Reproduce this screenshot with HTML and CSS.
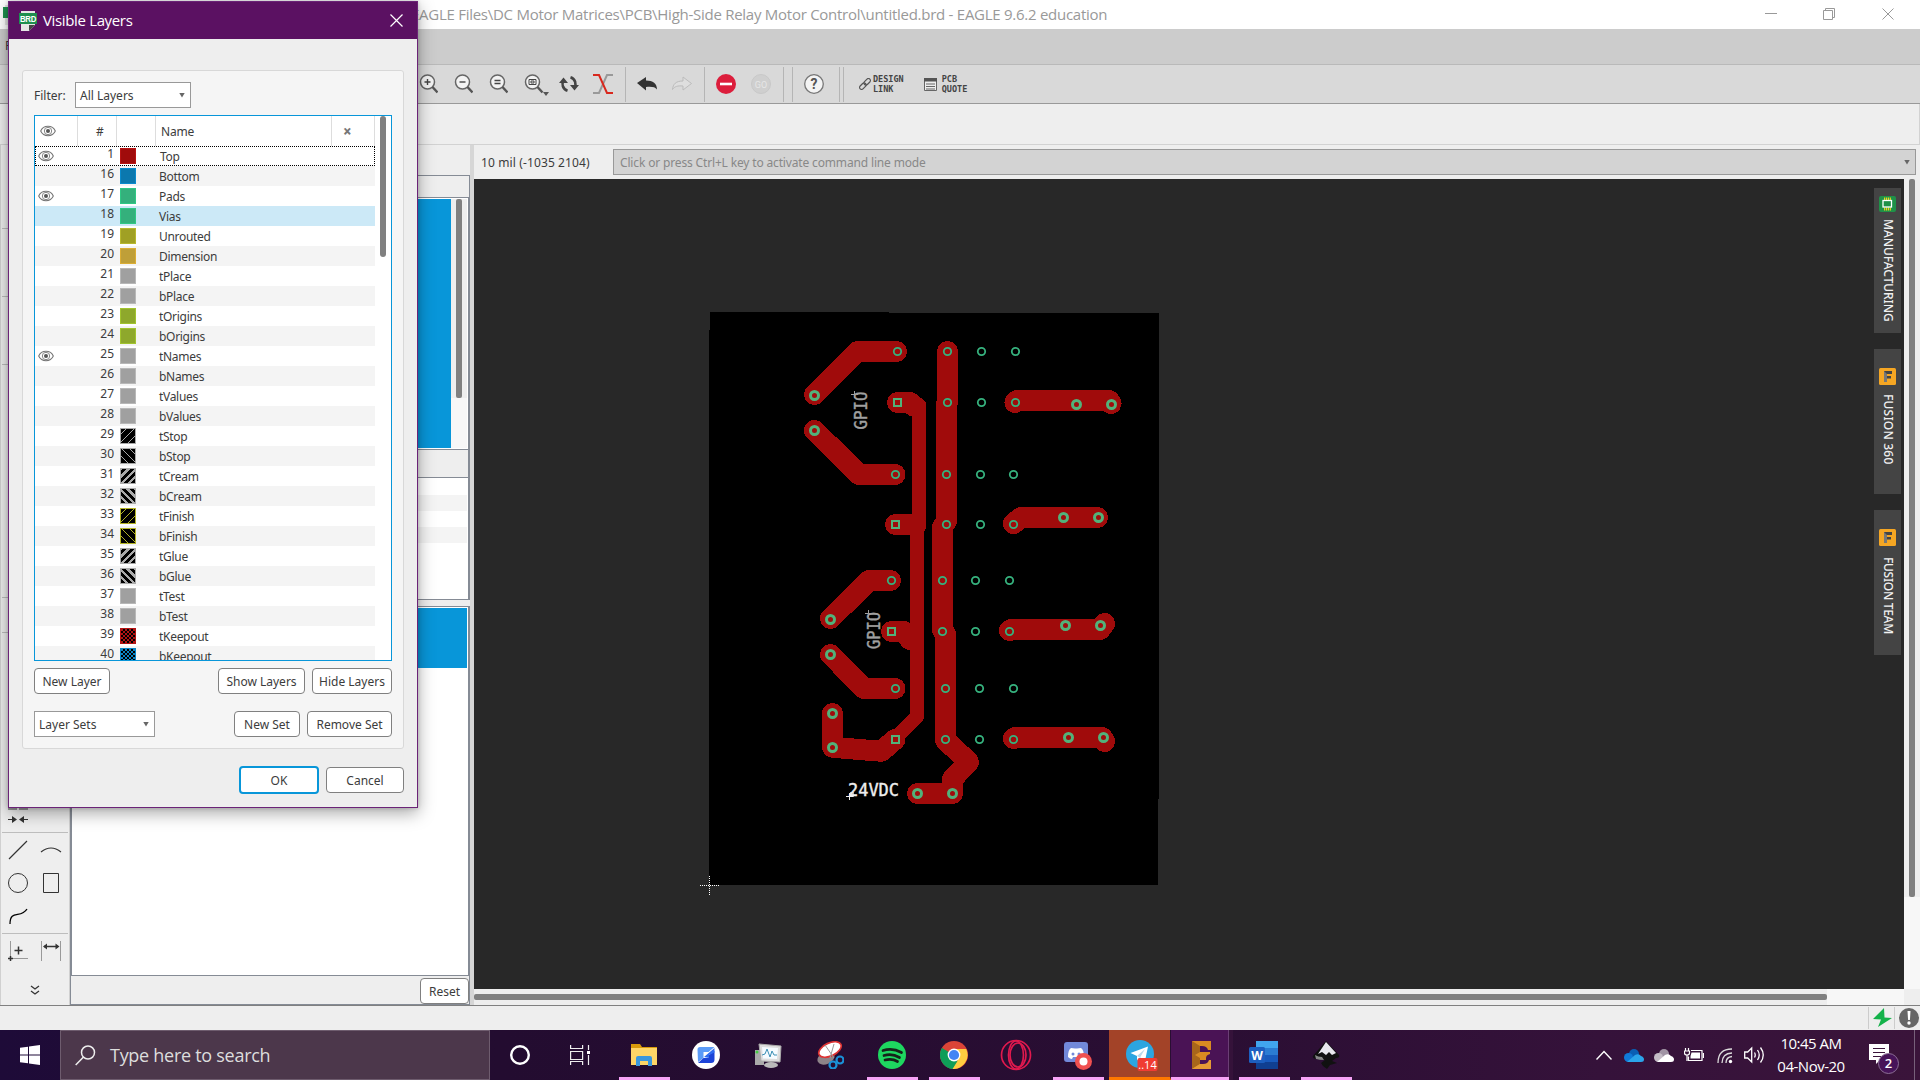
FILE: index.html
```
<!DOCTYPE html>
<html lang="en">
<head>
<meta charset="utf-8">
<title>EAGLE</title>
<link rel="stylesheet" href="styles.css">
</head>
<body>
<svg class="defs" width="0" height="0">
  <symbol id="eye" viewBox="0 0 16 12"><path d="M.7 6C3.500 -.3 12.500 -.3 15.300 6 12.500 12.300 3.500 12.300 .7 6Z" fill="#fff" stroke="#777" stroke-width="1.100"/><circle cx="8" cy="6" r="3.700" fill="none" stroke="#888"/><circle cx="8" cy="6" r="2" fill="#555"/></symbol>
  <symbol id="brd" viewBox="0 0 18 20"><path d="M2 0h14v14l-6 6H2z" fill="#e6e6e6"/><path d="M16 14l-6 6v-6z" fill="#444"/><rect y="2" width="18" height="11" fill="#1e8f4e"/><text x="9" y="10.700" font-size="8.500" font-weight="bold" text-anchor="middle" textLength="16" lengthAdjust="spacingAndGlyphs" fill="#fff" font-family="Liberation Sans">BRD</text></symbol>
  <symbol id="lens" viewBox="0 0 20 20"><circle cx="8.500" cy="8" r="7" fill="#f3f3f3" stroke="#666" stroke-width="1.500"/><path d="M13.500 13l5 5.500" stroke="#555" stroke-width="2.400"/></symbol>
  <symbol id="fusion" viewBox="0 0 17 17"><rect width="17" height="17" rx="1.500" fill="#f5a623"/><path d="M5 3h8v3H8v2h4v2.500H8V14H5z" fill="#444"/><path d="M5 3l3 3v8H5z" fill="#777"/></symbol>
</svg>

<header class="titlebar">
  <svg class="app-icon" width="18" height="20"><path d="M2 0h14v20H2z" fill="#e6e6e6"/><path d="M0 2h18v11H0z" fill="#1e8f4e"/></svg>
  <span class="path">EAGLE Files\DC Motor Matrices\PCB\High-Side Relay Motor Control\untitled.brd - EAGLE 9.6.2 education</span>
  <svg class="winbtns" width="130" height="29" fill="none" stroke="#999"><path d="M0 13.500h12"/><path d="M58.500 10.500h9v9h-9zM60.500 10.500v-2h9v9h-2"/><path d="M117.500 8.500l11 11m0-11l-11 11"/></svg>
</header>
<nav class="menubar">F</nav>
<div class="toolbar">
  <svg class="tb" width="19" height="20"><use href="#lens" width="20" height="20"/><path d="M5.500 8h6M8.500 5v6" stroke="#444" stroke-width="1.400"/></svg>
  <svg class="tb" width="19" height="20"><use href="#lens" width="20" height="20"/><path d="M5.500 8h6" stroke="#444" stroke-width="1.400"/></svg>
  <svg class="tb" width="19" height="20"><use href="#lens" width="20" height="20"/><path d="M5.500 6.500h6m-6 3h6" stroke="#444" stroke-width="1.400"/></svg>
  <svg class="tb" width="25" height="24"><use href="#lens" y="2" width="20" height="20"/><path d="M5 7.500h7v5H5zM7 9h3v2H7z" fill="none" stroke="#444"/><path d="M19 20h6l-3 4z" fill="#555"/></svg>
  <svg class="tb rot" width="20" height="18" fill="none" stroke="#444" stroke-width="2.600"><path d="M8.500 15.700C3.500 14 2.500 9 4.500 5.500M11.500 2.300c5 1.700 6 6.700 4 10.200"/><path d="M0 8l4.500-5.500L9 8zM11 10h9l-4.500 5.500z" fill="#444" stroke="none"/></svg>
  <svg class="tb xx" width="20" height="20" fill="none" stroke-width="2"><path d="M20 1h-6L6 19H0" stroke="#999"/><path d="M0 1h6l8 18h6" stroke="#d8281e"/></svg>
  <i class="sep s1"></i>
  <svg class="tb undo" width="20" height="16"><path d="M0 7L9 1v3.500c7 0 11 3 11 9-2-2.500-5-3-11-2.500v3.500z" fill="#333"/></svg>
  <svg class="tb redo" width="20" height="16"><path d="M19.500 7.500L11 1v4C4 5 1 8 .5 13.500c2-3 5-4 10.500-3.500v4z" fill="#dedede" stroke="#bbb"/></svg>
  <i class="sep s2"></i>
  <svg class="tb stop" width="20" height="20"><circle cx="10" cy="10" r="10" fill="#dc1e3c"/><path d="M4 10h12" stroke="#fff" stroke-width="2.600"/></svg>
  <svg class="tb go" width="20" height="20"><circle cx="10" cy="10" r="9.500" fill="#cfcfcf" stroke="#c8c8c8"/><text x="10" y="13.500" font-size="9" text-anchor="middle" fill="#e6e6e6" font-family="Roboto">GO</text></svg>
  <i class="sep s3"></i><i class="sep s4"></i>
  <svg class="tb help" width="20" height="20"><circle cx="10" cy="10" r="9.300" fill="#f4f4f4" stroke="#777" stroke-width="1.300"/><text x="10" y="15" font-size="14" font-weight="bold" text-anchor="middle" fill="#555" font-family="Roboto">?</text></svg>
  <i class="sep s5"></i><i class="sep s4b"></i>
  <svg class="tb link" width="12" height="12" fill="none" stroke="#555" stroke-width="1.200"><rect x="4.500" y="2" width="7.500" height="4" rx="2" transform="rotate(-45 8 4)"/><rect x="0" y="6" width="7.500" height="4" rx="2" transform="rotate(-45 4 8)"/></svg>
  <span class="tool-text">DESIGN<br>LINK</span>
  <svg class="tb quote" width="13" height="13"><path d="M.5.5h12v12H.5zM2 6h9M2 8.500h9M2 11h9" fill="#eee" stroke="#666"/><path d="M0 0h13v3.500H0z" fill="#555"/></svg>
  <span class="tool-text">PCB<br>QUOTE</span>
</div>
<div class="params"></div>

<main class="main">
  <aside class="tools">
    <svg width="70" height="860" fill="none" stroke="#333">
      <path d="M.5 0v860" stroke="#d0d0d0"/><path d="M69.500 0v860" stroke="#d0d0d0"/>
      <path d="M2 83.500h66M2 151.500h66M2 219.500h66M2 452.500h66M2 487.500h66M2 687.500h66M2 788.500h66" stroke="#bdbdbd"/>
      <path d="M8 664h9m2 0h9" stroke="#999" stroke-width="2"/>
      <path d="M8 674.500h5M23 674.500h5"/><path d="M12 671l5 3.500-5 3.500zM24 671l-5 3.500 5 3.500z" fill="#333" stroke="none"/>
      <path d="M9 714L27 696M41 707q10-8 20 0" stroke-width="1.200"/>
      <circle cx="18" cy="738" r="9.500"/><path d="M43.500 728.500h15v19h-15z"/>
      <path d="M10 779c0-15 11-5 17-15" stroke="#000" stroke-width="1.300"/>
      <path d="M10.500 796v15M13 813.500h15M41.500 796v20M60.500 796v20" stroke="#999"/><path d="M18.500 801.500v8m-4-4h8M10.500 811v5M8 813.500h5M44 801.500h14" stroke-width="1.500"/><path d="M43 801.500l4-3v6zM59.500 801.500l-4-3v6z" fill="#333" stroke="none"/>
      <path d="M31 841l4 3 4-3M31 846l4 3 4-3" stroke-width="1.300"/>
    </svg>
  </aside>
  <section class="dock">
    <div class="dock-gap"></div>
    <div class="dock-head"></div>
    <div class="dock-list"><div class="blue"></div><div class="track"><i></i></div></div>
    <div class="dock-label"></div>
    <div class="dock-props"><i></i><i></i><i></i><i></i></div>
    <div class="dock-items"><div class="blue"></div></div>
    <div class="dock-foot"><button class="btn reset">Reset</button></div>
  </section>
  <div class="splitter"></div>
  <section class="editor">
    <div class="cmdline"><span class="coords">10 mil (-1035 2104)</span><div class="cmd"><span>Click or press Ctrl+L key to activate command line mode</span><b class="arrow"></b></div></div>
    <div class="view">
      <div class="canvas">
        <svg class="board" width="1400" height="810" viewBox="474 179 1400 810">
          <path d="M710 312h179v1h270v486h-1v86H709V330h1z" fill="#000"/>
          <g fill="none" stroke="#a00b0b" stroke-width="21" stroke-linecap="round" stroke-linejoin="round" shape-rendering="crispEdges">
            <path d="M814.500 394.500L857.500 351.500H896.500M814.500 430.500L859 474.500H895"/>
            <path d="M897.500 402.500H910l3.500 3.500M895.500 524.500H914M891.500 631.500H904l6 8"/>
            <path d="M947.500 351.500V402L946.500 404V521L942.500 527V630L945.500 634V740L968.500 762L952.500 779V793.500H917.500"/>
            <path d="M1015 402.500L1017 400.500H1109L1111 403.500M1013.500 523.500L1021 517.500H1097.500M1009.500 630.500L1011 629.500H1100L1104.500 623.500M1013.500 738.500L1015 737.500H1102L1104.500 741.500"/>
            <path d="M830.500 618.500L869 580.500H890.500M830.500 654.500L864 688.500H895"/>
            <path d="M832.500 713.500V747.300L881.500 751.300L895 739.500"/>
            <path d="M919 405V526L917 531V716.500L895 739" stroke-width="14"/>
          </g>
          <g fill="none" stroke="#36b27e" stroke-width="1.800">
            <circle cx="897.500" cy="351.500" r="3.700"/><circle cx="947.500" cy="351.500" r="3.700"/><circle cx="981.500" cy="351.500" r="3.700"/><circle cx="1015.500" cy="351.500" r="3.700"/>
            <circle cx="947.500" cy="402.500" r="3.700"/><circle cx="981.500" cy="402.500" r="3.700"/><circle cx="1015.500" cy="402.500" r="3.700"/>
            <circle cx="895.500" cy="474.500" r="3.700"/><circle cx="946.500" cy="474.500" r="3.700"/><circle cx="980.500" cy="474.500" r="3.700"/><circle cx="1013.500" cy="474.500" r="3.700"/>
            <circle cx="946.500" cy="524.500" r="3.700"/><circle cx="980.500" cy="524.500" r="3.700"/><circle cx="1013.500" cy="524.500" r="3.700"/>
            <circle cx="891.500" cy="580.500" r="3.700"/><circle cx="942.500" cy="580.500" r="3.700"/><circle cx="975.500" cy="580.500" r="3.700"/><circle cx="1009.500" cy="580.500" r="3.700"/>
            <circle cx="942.500" cy="631.500" r="3.700"/><circle cx="975.500" cy="631.500" r="3.700"/><circle cx="1009.500" cy="631.500" r="3.700"/>
            <circle cx="895.500" cy="688.500" r="3.700"/><circle cx="945.500" cy="688.500" r="3.700"/><circle cx="979.500" cy="688.500" r="3.700"/><circle cx="1013.500" cy="688.500" r="3.700"/>
            <circle cx="945.500" cy="739.500" r="3.700"/><circle cx="979.500" cy="739.500" r="3.700"/><circle cx="1013.500" cy="739.500" r="3.700"/>
          </g>
          <g fill="none" stroke="#52b27a" stroke-width="2">
            <path d="M894 399h7v7h-7zM892 521h7v7h-7zM888 628h7v7h-7zM892 736h7v7h-7z"/>
          </g>
          <g fill="none" stroke="#52b27a" stroke-width="3">
            <circle cx="814.500" cy="395.500" r="4"/><circle cx="814.500" cy="430.500" r="4"/><circle cx="1076.500" cy="404.500" r="4"/><circle cx="1111.500" cy="404.500" r="4"/>
            <circle cx="1063.500" cy="517.500" r="4"/><circle cx="1098.500" cy="517.500" r="4"/><circle cx="1065.500" cy="625.500" r="4"/><circle cx="1100.500" cy="625.500" r="4"/>
            <circle cx="830.500" cy="619.500" r="4"/><circle cx="830.500" cy="654.500" r="4"/><circle cx="1068.500" cy="737.500" r="4"/><circle cx="1103.500" cy="737.500" r="4"/>
            <circle cx="832.500" cy="713.500" r="4"/><circle cx="832.500" cy="747.500" r="4"/><circle cx="917.500" cy="793.500" r="4"/><circle cx="952.500" cy="793.500" r="4"/>
          </g>
          <g class="silk" fill="#a0a0a0" stroke="#a0a0a0" stroke-width=".4">
            <text transform="translate(867 429.500) rotate(-90)" textLength="38" lengthAdjust="spacingAndGlyphs">GPIO</text>
            <text transform="translate(880 649) rotate(-90)" textLength="37" lengthAdjust="spacingAndGlyphs">GPIO</text>
            <text x="848" y="796" textLength="51" lengthAdjust="spacingAndGlyphs" fill="#eee" stroke="#eee">24VDC</text>
          </g>
          <path d="M854.500 391v7M851 394.500h7M868.500 610v7M865 613.500h7" stroke="#a0a0a0"/>
          <path d="M849.500 793v7M846 796.500h7" stroke="#eee"/><path d="M850 792h4v5h-4z" fill="#eee" opacity=".7"/>
          <path d="M700 885.500h20M709.500 876v20" stroke="#fff" stroke-dasharray="1 1"/>
        </svg>
        <div class="tabs">
          <div class="tab mfg"><svg width="17" height="16"><rect width="17" height="16" rx="2" fill="#1f9148"/><path d="M5 3h7M5 13h7" stroke="#e8d820" stroke-width="3" stroke-dasharray="1.200 .7"/><rect x="4" y="4.500" width="8.500" height="6.500" fill="#1f9148" stroke="#fff" stroke-width="1.300"/></svg><span>MANUFACTURING</span></div>
          <div class="tab f360"><svg width="17" height="17"><use href="#fusion"/></svg><span>FUSION 360</span></div>
          <div class="tab team"><svg width="17" height="17"><use href="#fusion"/></svg><span>FUSION TEAM</span></div>
        </div>
      </div>
      <div class="vscroll"><i></i></div>
    </div>
    <div class="hscroll"><i></i></div>
  </section>
</main>
<footer class="status">
  <svg width="27" height="22"><path d="M15 1L4 12l8 .5L9 20 23 11l-7.500-.5z" fill="#14b24a"/></svg>
  <svg class="warn" width="20" height="20"><circle cx="10" cy="10" r="10" fill="#666"/><path d="M8.500 3h3l-.6 9H9.100z" fill="#fff"/><circle cx="10" cy="15" r="1.700" fill="#fff"/></svg>
</footer>

<div class="taskbar">
  <div class="start"><svg width="20" height="20" fill="#fff"><path d="M0 2.800L8 1.700V9.500H0zM9 1.500L20 0v9.500H9zM0 10.500h8v7.800L0 17.200zM9 10.500h11V20L9 18.500z"/></svg></div>
  <div class="search"><svg width="21" height="21" fill="none" stroke="#eee" stroke-width="1.500"><circle cx="13" cy="7.500" r="6.500"/><path d="M8.500 12L.7 20"/></svg><span>Type here to search</span></div>
  <div class="slot cortana"><svg width="22" height="22"><circle cx="11" cy="11" r="8.800" fill="none" stroke="#fff" stroke-width="2.400"/></svg></div>
  <div class="slot tv"><svg width="21" height="20" fill="none" stroke="#eee" stroke-width="1.200"><path d="M.6 0v3.500h12V0M.6 6.500h12v8H.6zM.6 20v-3.500h12V20M18.500 0v5M18.500 10v10"/><path d="M17 6h3v3h-3z" fill="#fff" stroke="none"/></svg></div>
  <div class="apps">
    <div class="slot run"><svg width="28" height="28"><path d="M1 3h9l2 3h15v17H1z" fill="#d99a0b"/><path d="M1 7h26v17H1z" fill="#ffd567"/><path d="M6 25v-8q0-2 2-2h12q2 0 2 2v8h-4v-5h-8v5z" fill="#3b97dd"/></svg></div>
    <div class="slot"><svg width="28" height="28"><circle cx="14" cy="14" r="14" fill="#fff"/><path d="M5.500 8.500Q5.500 6 8 6h14.500l-6 5h-5v6l-5.500 4z" fill="#5b9bf8"/><path d="M22.500 10v8.500q0 3.500-3.500 3.500H6l5.500-5h5.500v-3z" fill="#1d44d8"/><path d="M12 16l10.500-9v4.500L17 14v3z" fill="#2f6bf0"/></svg></div>
    <div class="slot"><svg width="28" height="28"><path d="M1 9h9v15H1z" fill="#aaa"/><circle cx="3" cy="11" r="1.500" fill="#4c4"/><path d="M5 3l22 2-1 16-19-1z" fill="#ddd" stroke="#aaa"/><path d="M8 6l16 1-1 11-14-.5z" fill="#f5fbff"/><path d="M8 14l3-1 2-5 3 8 2-6 2 4h3" fill="none" stroke="#3b8fb5"/><ellipse cx="17" cy="24" rx="7" ry="3" fill="#bbb"/></svg></div>
    <div class="slot"><svg width="28" height="28"><ellipse cx="10" cy="17" rx="9" ry="6" fill="#8d8388" transform="rotate(-25 10 17)"/><ellipse cx="14" cy="8.500" rx="12" ry="6.500" fill="#fff" stroke="#d33" stroke-width="1.700" transform="rotate(-25 14 8.500)"/><path d="M9 4l9 13M18 3l-4 14" stroke="#999" fill="none"/><g fill="none" stroke="#1a91d8" stroke-width="2.200"><circle cx="17" cy="24" r="3.500"/><circle cx="24" cy="19" r="3.500"/></g></svg></div>
    <div class="slot run"><svg width="28" height="28"><circle cx="14" cy="14" r="14" fill="#1ed760"/><path d="M5 9.500q9.500-3 18.500 2M6 14.500q8-2.500 15.500 2M7 19q7-2 12.500 1.500" stroke="#16231a" stroke-width="2.700" fill="none" stroke-linecap="round"/></svg></div>
    <div class="slot run"><svg width="28" height="28"><circle cx="14" cy="14" r="14" fill="#db4437"/><path d="M14 14L2 7a14 14 0 0 0 10 20.800L19 17z" fill="#0f9d58"/><path d="M14 14l5 3-7 10.900A14 14 0 0 0 26.200 8H14z" fill="#ffcd40"/><path d="M2 7l6 10 6 4 3.500-1L12.500 28A14 14 0 0 1 2 7z" fill="#0f9d58"/><circle cx="14" cy="14" r="6.400" fill="#fff"/><circle cx="14" cy="14" r="5.100" fill="#4285f4"/></svg></div>
    <div class="slot"><svg width="32" height="32" fill="none" stroke="#e0194e" stroke-width="1.700"><circle cx="16" cy="16" r="14.500"/><ellipse cx="16" cy="16" rx="7.500" ry="14"/><ellipse cx="18" cy="16" rx="8" ry="12"/></svg></div>
    <div class="slot run"><svg width="30" height="30"><path d="M4 2h18q3 0 3 3v20l-5-3H4q-3 0-3-3V5q0-3 3-3z" fill="#7289da"/><path d="M5 17q0-7 3-9l4 .5h2l4-.5q3 2 3 9-2 2-4 2l-1-2h-6l-1 2q-2 0-4-2z" fill="#fff"/><circle cx="10" cy="14" r="1.500" fill="#7289da"/><circle cx="16" cy="14" r="1.500" fill="#7289da"/><circle cx="20.500" cy="21.500" r="8.500" fill="#f05050"/><circle cx="20.500" cy="21.500" r="4" fill="#fff"/></svg></div>
    <div class="slot tg"><svg width="32" height="32"><circle cx="14" cy="15" r="14" fill="#2ca5e0"/><path d="M4.500 14L22 7.500 19 22l-5-3.500-3 3V17z" fill="#fff"/><path d="M11 17l8-7-5 8.500" fill="#b8d8ea"/><rect x="11.500" y="19" width="20" height="13" rx="2" fill="#f03c32"/><text x="21.500" y="29.500" font-size="11" text-anchor="middle" fill="#fff" font-family="Open Sans">..14</text></svg></div>
    <div class="slot run full"><svg width="22" height="30"><path d="M1 1h19v9h-3q-1-4-6-4h-2v6h10v2q-4 1-4 4v2H9v5h3q5 0 6-4h2v8H1z" fill="#d98b22"/><path d="M1 1l8 5v6l-5 3 5 3v6l-8 5z" fill="#a8661a"/><path d="M1 29l8-5h3q5 0 6-4h2v9z" fill="#e59a35"/></svg></div>
    <div class="slot run"><svg width="30" height="28"><path d="M7 0h22v7H7z" fill="#41a5ee"/><path d="M7 7h22v7H7z" fill="#2b7cd3"/><path d="M7 14h22v7H7z" fill="#185abd"/><path d="M7 21h22v7H7z" fill="#103f91"/><rect y="6" width="16" height="16" rx="1.500" fill="#1d5fc0"/><text x="8" y="18.500" font-size="12" font-weight="bold" text-anchor="middle" fill="#fff" font-family="Open Sans">W</text></svg></div>
    <div class="slot run"><svg width="28" height="28"><path d="M14 0L27 14q1 3-3 3l-4 3 5 2-7 2-3 4-4-3-2-3 4-3-9-1q-4-1-3-3z" fill="#111"/><path d="M14 1l10 11-4 2-3-3-3 3-4-3-4 2z" fill="#e8e8ee"/><path d="M3 14q3 2 7 2l2 3q-5 0-8-1z" fill="#888"/></svg></div>
  </div>
  <div class="tray">
    <svg class="chev" width="16" height="10" fill="none" stroke="#fff" stroke-width="1.400"><path d="M.5 9.500L8 1.500l7.500 8"/></svg>
    <svg class="t2" width="20" height="13"><circle cx="10" cy="5" r="5" fill="#0a5fb4"/><circle cx="4.500" cy="8.500" r="4.500" fill="#0f7ad8"/><path d="M3 13l8-7q4-2 6 1 3 1 3 3.500T17 13z" fill="#2ba5ea"/></svg>
    <svg class="t3" width="20" height="13"><circle cx="10" cy="5" r="5" fill="#a094a4"/><circle cx="4.500" cy="8.500" r="4.500" fill="#c4bcc6"/><path d="M3 13l8-7q4-2 6 1 3 1 3 3.500T17 13z" fill="#fff"/></svg>
    <svg class="t4" width="20" height="14" fill="none" stroke="#fff" stroke-width="1.200"><path d="M4.500 8.500v4H18v-10H7M19.500 5v5M1.500 0v3M4.500 0v3M.5 3h5v2q0 2-2.500 2T.5 5zM3 7v6"/><path d="M7.500 4.500H16v6H6.500V8z" fill="#fff" stroke="none"/></svg>
    <svg class="t5" width="16" height="16" fill="none" stroke="#ddd" stroke-width="1.300"><path d="M1 15Q1 1 15 1M5 15q0-9.500 10-10M9 15q0-6 6-6.500"/><circle cx="13.500" cy="13.500" r="1.700" fill="#fff" stroke="none"/></svg>
    <svg class="t6" width="21" height="18" fill="none" stroke="#fff" stroke-width="1.300"><path d="M.7 6h3l4-4v14l-4-4h-3zM10.500 6.500q1.500 2.500 0 5M13.500 4q3.500 5 0 10M16.500 1.500q5.500 7.500 0 15"/></svg>
    <div class="clock"><span>10:45 AM</span><span class="date">04-Nov-20</span></div>
    <svg class="note" width="32" height="32"><path d="M0 0h20v16h-9l-4 4v-4H0z" fill="#fff"/><path d="M4 4.500h12M4 8.500h12M4 12.500h8" stroke="#3a143a" stroke-width="1.200"/><circle cx="19.500" cy="19.500" r="10" fill="#471459" stroke="#8c6f96"/><text x="19.500" y="24" font-size="13" font-weight="600" text-anchor="middle" fill="#fff" font-family="Open Sans">2</text></svg>
    <i class="peek"></i>
  </div>
</div>

<div class="dialog">
  <div class="dlg-title"><svg width="18" height="20"><use href="#brd"/></svg><span>Visible Layers</span><svg class="x" width="13" height="13" stroke="#fff" stroke-width="1.200"><path d="M.5.500l12 12m0-12l-12 12"/></svg></div>
  <div class="panel">
    <div class="filter"><label>Filter:</label><div class="select all"><span>All Layers</span><b class="arrow"></b></div></div>
    <div class="table">
      <div class="thead"><div class="h1"><svg width="16" height="12"><use href="#eye"/></svg></div><div class="h2">#</div><div class="h3"></div><div class="h4">Name</div><div class="h5">×</div></div>
      <div class="rows">
        <div class="row focus"><svg class="e" width="16" height="12"><use href="#eye"/></svg><span class="n">1</span><i class="sw top"></i><span class="nm">Top</span></div>
        <div class="row"><span class="n">16</span><i class="sw bot"></i><span class="nm">Bottom</span></div>
        <div class="row"><svg class="e" width="16" height="12"><use href="#eye"/></svg><span class="n">17</span><i class="sw grn"></i><span class="nm">Pads</span></div>
        <div class="row sel"><span class="n">18</span><i class="sw grn"></i><span class="nm">Vias</span></div>
        <div class="row"><span class="n">19</span><i class="sw unr"></i><span class="nm">Unrouted</span></div>
        <div class="row"><span class="n">20</span><i class="sw dim"></i><span class="nm">Dimension</span></div>
        <div class="row"><span class="n">21</span><i class="sw gry"></i><span class="nm">tPlace</span></div>
        <div class="row"><span class="n">22</span><i class="sw gry"></i><span class="nm">bPlace</span></div>
        <div class="row"><span class="n">23</span><i class="sw org"></i><span class="nm">tOrigins</span></div>
        <div class="row"><span class="n">24</span><i class="sw org"></i><span class="nm">bOrigins</span></div>
        <div class="row"><svg class="e" width="16" height="12"><use href="#eye"/></svg><span class="n">25</span><i class="sw gry"></i><span class="nm">tNames</span></div>
        <div class="row"><span class="n">26</span><i class="sw gry"></i><span class="nm">bNames</span></div>
        <div class="row"><span class="n">27</span><i class="sw gry"></i><span class="nm">tValues</span></div>
        <div class="row"><span class="n">28</span><i class="sw gry"></i><span class="nm">bValues</span></div>
        <div class="row"><span class="n">29</span><i class="sw thin up"></i><span class="nm">tStop</span></div>
        <div class="row"><span class="n">30</span><i class="sw thin"></i><span class="nm">bStop</span></div>
        <div class="row"><span class="n">31</span><i class="sw thick up"></i><span class="nm">tCream</span></div>
        <div class="row"><span class="n">32</span><i class="sw thick"></i><span class="nm">bCream</span></div>
        <div class="row"><span class="n">33</span><i class="sw thin up yel"></i><span class="nm">tFinish</span></div>
        <div class="row"><span class="n">34</span><i class="sw thin yel"></i><span class="nm">bFinish</span></div>
        <div class="row"><span class="n">35</span><i class="sw thick up"></i><span class="nm">tGlue</span></div>
        <div class="row"><span class="n">36</span><i class="sw thick"></i><span class="nm">bGlue</span></div>
        <div class="row"><span class="n">37</span><i class="sw gry"></i><span class="nm">tTest</span></div>
        <div class="row"><span class="n">38</span><i class="sw gry"></i><span class="nm">bTest</span></div>
        <div class="row"><span class="n">39</span><i class="sw dots red"></i><span class="nm">tKeepout</span></div>
        <div class="row"><span class="n">40</span><i class="sw dots blu"></i><span class="nm">bKeepout</span></div>
      </div>
      <i class="thumb"></i>
    </div>
    <div class="btns"><button class="btn b76">New Layer</button><button class="btn b87 push">Show Layers</button><button class="btn b80">Hide Layers</button></div>
    <div class="btns sets"><div class="select lset"><span>Layer Sets</span><b class="arrow"></b></div><button class="btn b66 push">New Set</button><button class="btn b85">Remove Set</button></div>
  </div>
  <div class="dlg-foot"><button class="btn ok">OK</button><button class="btn cancel">Cancel</button></div>
</div>
</body>
</html>
```
FILE: styles.css
```
* { box-sizing: border-box; }
body { margin: 0; width: 1920px; height: 1080px; overflow: hidden; display: flex; flex-direction: column; background: #eee; font: 12px/16px "Noto Sans", "Open Sans", sans-serif; color: #3c3c3c; position: relative; }
.defs { position: absolute; }
svg { display: block; flex: none; }
i { display: block; }

.titlebar { height: 29px; flex: none; background: #fff; display: flex; align-items: center; padding-left: 3px; font: 15px/20px "Open Sans", sans-serif; color: #999; }
.path { margin: -2px 0 0 390px; width: 1354px; white-space: nowrap; letter-spacing: -0.265px; }
.menubar { height: 36px; flex: none; background: #ccc; border-bottom: 1px solid #b9b9b9; padding: 9px 5px; }
.toolbar { height: 39px; flex: none; background: #d9d9d9; border-bottom: 1px solid #999; display: flex; align-items: center; padding-left: 419px; }
.tb { margin-right: 16px; }
.tb.rot { margin: 0 14px 0 0; }
.tb:nth-child(4) { margin-right: 10px; }
.tb.xx { margin-right: 12px; }
.sep { width: 1px; height: 35px; background: #b5b5b5; flex: none; }
.tb.undo { margin: 0 15px 0 11px; }
.tb.redo { margin-right: 12px; }
.tb.stop { margin: 0 15px 0 11px; }
.tb.go { margin-right: 12px; }
.s4 { margin-left: 8px; }
.tb.help { margin: 0 15px 0 11px; }
.s4b { margin-left: 3px; }
.tb.link { margin: 0 2px 0 15px; }
.tb.quote { margin: 0 5px 0 20px; }
.tool-text { font: bold 8.5px/10px "DejaVu Sans Mono", monospace; color: #444; }
.params { height: 41px; flex: none; border-bottom: 1px solid #d2d2d2; border-right: 1px solid #d2d2d2; }

.main { height: 860px; flex: none; display: flex; }
.tools { width: 70px; flex: none; }
.dock { width: 400px; flex: none; display: flex; flex-direction: column; }
.dock-gap { height: 30px; }
.dock-head { height: 22px; border: 1px solid #858b95; border-bottom: 0; }
.dock-list { height: 253px; border: 1px solid #858b95; border-right-width: 2px; background: #fff; display: flex; padding: 1px 1px 1px 0; }
.blue { background: #0896d9; }
.dock-list .blue { flex: 1; }
.track { width: 16px; background: linear-gradient(#eee 199px, #f7f7f7 199px); padding-left: 5px; }
.track i { width: 6px; height: 199px; border-radius: 2px; background: #808080; }
.dock-label { height: 27px; border-right: 2px solid #858b95; }
.dock-props { height: 123px; border: 1px solid #858b95; border-right-width: 2px; background: #fff; }
.dock-props i { height: 16px; margin-right: 1px; }
.dock-props i:first-child { height: 17px; }
.dock-props i:nth-child(even) { background: #f4f4f4; }
.dock-items { margin-top: 6px; height: 370px; border: 1px solid #858b95; border-width: 1px 2px 1px 2px; background: #fff; padding: 1px 1px 0 0; }
.dock-items .blue { height: 60px; }
.dock-foot { height: 29px; border: 1px solid #858b95; border-top: 0; display: flex; justify-content: flex-end; padding-top: 2px; }
.btn { height: 26px; padding: 1px 0 0; border: 1px solid #808080; border-radius: 4px; background: #fff; font: 12px/16px "Noto Sans", sans-serif; color: #3c3c3c; text-align: center; flex: none; white-space: nowrap; }
.reset { width: 49px; }
.splitter { width: 4px; background: #d6d6d6; flex: none; }
.editor { flex: 1; display: flex; flex-direction: column; }
.cmdline { height: 34px; display: flex; padding: 4px 4px 0 7px; }
.coords { width: 132px; line-height: 27px; white-space: nowrap; letter-spacing: 0.12px; }
.cmd { flex: 1; height: 26px; border: 1px solid #999; background: #d3d3d3; color: #888; display: flex; align-items: center; justify-content: space-between; padding: 0 5px 0 6px; }
.cmd span { padding-top: 1px; letter-spacing: -0.155px; }
.arrow { width: 6px; height: 5px; background: #666; clip-path: polygon(0 0, 100% 0, 50% 100%); }
.view { height: 810px; display: flex; }
.canvas { width: 1430px; background: #282828; display: flex; }
.tabs { padding-top: 9px; display: flex; flex-direction: column; gap: 16px; }
.tab { width: 27px; height: 145px; background: #444; display: flex; flex-direction: column; align-items: center; padding-top: 8px; gap: 7px; color: #f0f0f0; }
.tab span { writing-mode: vertical-rl; font: 12px/16px "Noto Sans", sans-serif; font-weight: 500; white-space: nowrap; letter-spacing: -0.1px; }
.f360, .team { padding-top: 19px; gap: 9px; }
.tab.f360 span { letter-spacing: 0.2px; }
.tab.team { gap: 11px; }
.tab.team span { letter-spacing: -0.3px; }
.vscroll { width: 16px; padding-left: 5px; background: linear-gradient(#eee 718px, #f7f7f7 718px); }
.vscroll i { width: 6px; height: 718px; border-radius: 2px; background: #808080; }
.hscroll { height: 16px; padding-top: 5px; background: linear-gradient(90deg, #eee 1353px, #f7f7f7 1353px 1430px, #eee 1430px); }
.hscroll i { width: 1353px; height: 6px; border-radius: 2px; background: #808080; }
.status { height: 25px; flex: none; border-top: 1px solid #808080; display: flex; justify-content: flex-end; align-items: center; padding-right: 1px; }
.status svg:first-child { border-left: 1px solid #ccc; border-right: 1px solid #ccc; margin-right: 4px; }

.taskbar { height: 50px; flex: none; display: flex; background: linear-gradient(90deg, #1e0b38 0, #230c30 500px, #2a0e33 1200px, #35123a 1600px, #3a143a); color: #fff; }
.start { width: 60px; padding: 15px 20px; }
.search { width: 430px; background: #4c374b; border: 1px solid #6e5c6e; display: flex; align-items: center; padding-left: 14px; font: 18px/24px "Open Sans", sans-serif; color: #ddd; letter-spacing: -0.28px; gap: 14px; }
.slot { width: 62px; height: 50px; display: flex; align-items: center; justify-content: center; position: relative; }
.cortana { width: 60px; }
.tv { width: 60px; margin-right: 3px; }
.apps { display: flex; }
.run::after { content: ""; position: absolute; left: 6px; right: 5px; bottom: 0; height: 3px; background: #f7a3f7; }
.tg { background: #a34328; border-bottom: 3px solid #ff7800; border-right: 1px solid #2a0e33; }
.tg svg { margin: 3px 0 0 4px; }
.full { background: linear-gradient(90deg, #4a1355 57px, #6b3f75 57px 58px, #35123a 58px); }
.full::after { left: 0; right: 4px; }
.tray { margin-left: 239px; display: flex; align-items: center; }
.t2 { margin-left: 12px; } .t3 { margin-left: 10px; } .t4 { margin-left: 10px; } .t5 { margin: 2px 0 0 13px; } .t6 { margin-left: 11px; }
.clock { width: 92px; text-align: center; font: 15px/23px "Open Sans", sans-serif; letter-spacing: -0.5px; display: flex; flex-direction: column; }
.note { margin: 10px 0 0 12px; }
.peek { width: 1px; height: 50px; margin-left: 13px; background: #77607a; }

.silk text { font: 18px "DejaVu Sans Mono", monospace; }

.dialog { position: absolute; left: 8px; top: 1px; width: 410px; height: 807px; border: 1px solid #6b2377; background: #eee; box-shadow: 0 5px 16px rgba(0,0,0,.35), 0 0 4px rgba(0,0,0,.2); padding: 0 13px; }
.dlg-title { height: 37px; margin: 0 -13px; background: #5b1162; display: flex; align-items: center; padding: 0 14px 0 10px; color: #fff; font: 15px/20px "Open Sans", sans-serif; letter-spacing: -0.35px; gap: 6px; }
.dlg-title span { margin-top: -2px; }
.dlg-title .x { margin-left: auto; }
.panel { margin-top: 31px; height: 679px; border: 1px solid #d8d8d8; border-radius: 3px; background: #f5f5f5; padding: 11px 11px 0; }
.filter { display: flex; align-items: center; }
.filter label { width: 41px; padding-top: 1px; }
.select { height: 26px; border: 1px solid #999; background: #fff; display: flex; align-items: center; justify-content: space-between; padding: 0 5px 0 4px; }
.select span { padding-top: 1px; }
.all { width: 116px; }
.lset { width: 121px; }
.table { margin-top: 7px; height: 546px; border: 1px solid #0896d9; background: #fff; position: relative; overflow: hidden; }
.thead { height: 30px; width: 340px; display: flex; align-items: center; }
.thead div { height: 30px; line-height: 31px; border-right: 1px solid #ddd; flex: none; }
.thead .h1 { width: 43px; padding: 9px 5px; }
.thead .h2 { width: 39px; padding-left: 18px; }
.thead .h3 { width: 39px; }
.thead .h4 { width: 176px; padding-left: 5px; letter-spacing: -0.2px; }
.thead .h5 { width: 43px; padding-left: 11px; font-size: 15px; font-weight: 800; color: #777; }
.rows { width: 340px; }
.row { height: 20px; display: grid; grid-template-columns: 3px 16px 60px 6px 16px 23px auto; }
.row:nth-child(even) { background: #f4f4f4; }
.row.sel { background: #cce9f7; }
.row.focus { outline: 1px dotted #000; outline-offset: -1px; }
.row.focus .nm { padding-left: 1px; }
.e { grid-column: 2; grid-row: 1; margin-top: 4px; }
.n { grid-column: 3; grid-row: 1; text-align: right; line-height: 15px; }
.sw { grid-column: 5; grid-row: 1; width: 16px; height: 16px; margin-top: 2px; border: 1px solid; }
.nm { grid-column: 7; grid-row: 1; line-height: 20px; padding-top: 1px; height: 20px; letter-spacing: -0.3px; }
.top { background: #a00b0b; border-color: #b81414; }
.bot { background: #0b78ae; border-color: #0a8bcd; }
.grn { background: #34b07c; border-color: #2fc985; }
.unr { background: #a0a024; border-color: #b8b82e; }
.dim { background: #bf9f38; border-color: #dcae34; }
.gry { background: #a0a0a0; border-color: #b8b8b8; }
.org { background: #8ea82c; border-color: #a2c42e; }
.thin { --c: #aaa; border-color: var(--c); background: repeating-linear-gradient(45deg, #000 0 4.600px, var(--c) 4.600px 5.600px); }
.thin.up { background: repeating-linear-gradient(-45deg, #000 0 4.600px, var(--c) 4.600px 5.600px); }
.thin.yel { --c: #b4b428; }
.thick { border-color: #aaa; background: repeating-linear-gradient(45deg, #000 0 3px, #aaa 3px 5.200px); }
.thick.up { background: repeating-linear-gradient(-45deg, #000 0 3px, #aaa 3px 5.200px); }
.dots { border-color: var(--c); background: radial-gradient(circle at 1px 1px, var(--c) .8px, transparent .9px) 0 0 / 4px 4px, radial-gradient(circle at 3px 3px, var(--c) .8px, transparent .9px) 0 0 / 4px 4px, #000; }
.red { --c: #b01212; }
.blu { --c: #0a84c4; }
.thumb { position: absolute; right: 5px; top: 0; width: 6px; height: 141px; border-radius: 3px; background: #808080; }
.btns { margin-top: 7px; display: flex; gap: 7px; }
.sets { margin-top: 17px; }
.push { margin-left: auto; }
.b76 { width: 76px; } .b87 { width: 87px; } .b80 { width: 80px; } .b66 { width: 66px; } .b85 { width: 85px; }
.dlg-foot { margin-top: 17px; display: flex; justify-content: flex-end; align-items: center; gap: 7px; }
.ok { width: 80px; height: 28px; border: 2px solid #0896d9; }
.cancel { width: 78px; }
```
